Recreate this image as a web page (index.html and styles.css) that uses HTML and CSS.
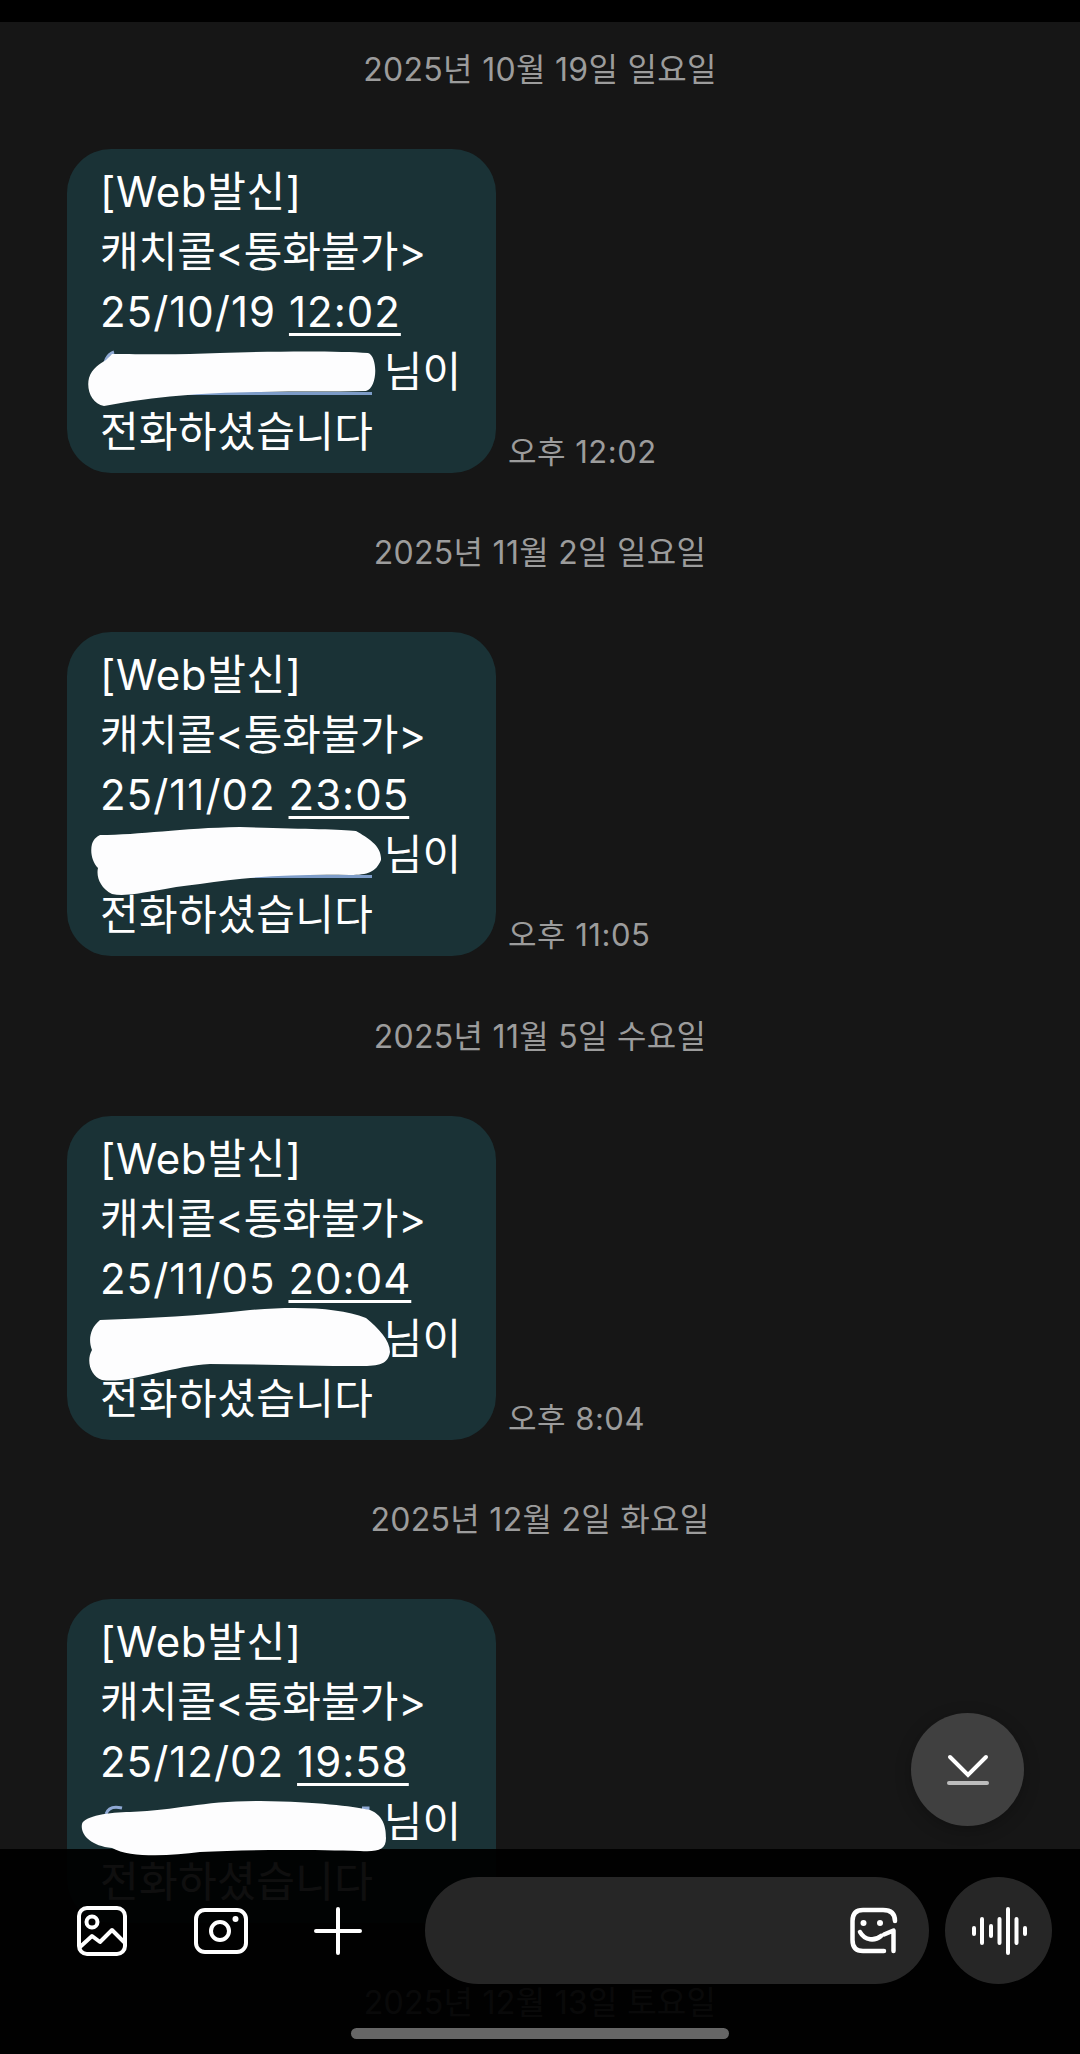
FILE: index.html
```html
<!DOCTYPE html>
<html lang="ko">
<head>
<meta charset="utf-8">
<title>메시지</title>
<link rel="stylesheet" href="styles.css">
</head>
<body>
<div class="screen">
  <div class="statusbar"></div>
  <main class="thread">
    <section class="day">
      <div class="date">2025년 10월 19일 일요일</div>
      <div class="msg">
        <div class="bubble">
          <div class="head">[Web발신]</div>
          <div>캐치콜&lt;통화불가&gt;</div>
          <div class="stamp">25/10/19 <u>12:02</u></div>
          <div><span class="phone"></span> 님이</div>
          <div class="tail">전화하셨습니다</div>
        </div>
        <time class="time">오후 12:02</time>
      </div>
    </section>
    <section class="day">
      <div class="date">2025년 11월 2일 일요일</div>
      <div class="msg">
        <div class="bubble">
          <div class="head">[Web발신]</div>
          <div>캐치콜&lt;통화불가&gt;</div>
          <div class="stamp">25/11/02 <u>23:05</u></div>
          <div><span class="phone"></span> 님이</div>
          <div class="tail">전화하셨습니다</div>
        </div>
        <time class="time">오후 11:05</time>
      </div>
    </section>
    <section class="day">
      <div class="date">2025년 11월 5일 수요일</div>
      <div class="msg">
        <div class="bubble">
          <div class="head">[Web발신]</div>
          <div>캐치콜&lt;통화불가&gt;</div>
          <div class="stamp">25/11/05 <u>20:04</u></div>
          <div><span class="phone"></span> 님이</div>
          <div class="tail">전화하셨습니다</div>
        </div>
        <time class="time">오후 8:04</time>
      </div>
    </section>
    <section class="day">
      <div class="date">2025년 12월 2일 화요일</div>
      <div class="msg">
        <div class="bubble">
          <div class="head">[Web발신]</div>
          <div>캐치콜&lt;통화불가&gt;</div>
          <div class="stamp">25/12/02 <u>19:58</u></div>
          <div><span class="phone"></span> 님이</div>
          <div class="tail">전화하셨습니다</div>
        </div>
        <time class="time">오후 7:58</time>
      </div>
    </section>
    <section class="day">
      <div class="date">2025년 12월 13일 토요일</div>
    </section>
  </main>

  <div class="composer">
    <button class="tool"><svg width="50" height="50" viewBox="0 0 50 50" fill="none" stroke="#fff" stroke-width="4" stroke-linejoin="round" stroke-linecap="round"><rect x="2" y="2" width="46" height="46" rx="8"/><circle cx="15" cy="16" r="5.5"/><path d="M3 41 L15 30 L23 36 L35 24 L47 36"/></svg></button>
    <button class="tool tool-cam"><svg width="54" height="46" viewBox="0 0 54 46" fill="none" stroke="#fff" stroke-width="4"><rect x="2" y="2" width="50" height="42" rx="9"/><circle cx="26" cy="23" r="9"/><circle cx="41.5" cy="11" r="3" fill="#fff" stroke="none"/></svg></button>
    <button class="tool tool-plus"><svg width="48" height="48" viewBox="0 0 48 48" fill="none" stroke="#fff" stroke-width="4" stroke-linecap="round"><path d="M24 2V46M2 24H46"/></svg></button>
    <div class="input">
      <svg width="50" height="48" viewBox="0 0 50 48" fill="none" stroke="#fff" stroke-width="4.500" stroke-linecap="round" stroke-linejoin="round"><path d="M34 44H13C6 44 2.500 40 2.500 33V14C2.500 7 6 3 13 3H33C41 3 45 7 45 14"/><circle cx="13.500" cy="16" r="3" fill="#fff" stroke="none"/><circle cx="30" cy="16" r="3" fill="#fff" stroke="none"/><path d="M10 25C15 34 25 34 31 29"/><path d="M34 27.500L43.500 23.500V44"/></svg>
    </div>
    <button class="voice"><svg width="56" height="50" viewBox="0 0 56 50" fill="none" stroke="#fff" stroke-width="4" stroke-linecap="round"><path d="M3 22V28M11 13V37M20 20V30M28.500 13V37M37 3V47M45.500 13V37M54 22V28"/></svg></button>
  </div>

  <button class="scroll-down"><svg width="44" height="32" viewBox="0 0 44 32" fill="none" stroke-width="4" stroke-linecap="round"><path d="M4 3L22 21L40 3" stroke="#fff"/><path d="M3 29H41" stroke="#bdbdbd"/></svg></button>
  <div class="home"></div>

  <svg class="scribble" viewBox="0 0 1080 2054" width="1080" height="2054" fill="#fdfdfe">
    <path class="peek" d="M104 372C104 360 108 354 114 352M106 1814C108 1808 114 1806 122 1808M362 1808H368V1816"/>
    <path d="M112 354C140 354 180 355 220 353C280 351 340 351 368 353C378 356 378 388 366 391C330 392 300 391 260 392C200 393 160 396 104 406C92 404 86 390 89 378C92 368 100 364 106 360Z"/>
    <path d="M100 835C140 835 180 828 240 827C300 829 340 829 356 831C368 838 382 846 381 860C376 872 368 875 350 875C300 874 250 876 200 884C160 888 130 898 112 894C100 888 96 876 98 868C92 862 90 852 92 844C94 838 98 836 100 835Z"/>
    <path d="M100 1320C150 1318 200 1316 250 1310C300 1306 340 1308 366 1318C378 1328 390 1340 390 1352C388 1364 380 1366 360 1366C310 1366 260 1364 210 1364C170 1366 130 1384 102 1380C90 1376 86 1360 92 1350C88 1340 90 1328 100 1320Z"/>
    <path d="M130 1812C180 1810 200 1801 260 1801C320 1802 350 1806 370 1810C385 1816 386 1830 386 1838C386 1850 378 1852 360 1851C320 1850 250 1849 200 1852C170 1856 130 1858 112 1848C90 1846 80 1834 82 1824C84 1816 110 1812 130 1812Z"/>
  </svg>
</div>
</body>
</html>
```
FILE: styles.css
```css
* { box-sizing: border-box; }
html, body { margin: 0; padding: 0; }
body {
  background: #161616;
  font-family: Inter, "Noto Sans CJK KR", sans-serif;
}
.screen {
  position: relative;
  width: 1080px;
  height: 2054px;
  overflow: hidden;
  background: #161616;
}
.statusbar { height: 22px; background: #000; }
.thread { display: flex; flex-direction: column; }
.day { display: flex; flex-direction: column; height: 483.3px; }
.date {
  height: 127px;
  padding-top: 28px;
  text-align: center;
  font-size: 32px;
  line-height: 40px;
  letter-spacing: .3px;
  color: #9c9c9c;
}
.msg { display: flex; align-items: flex-end; gap: 12px; padding-left: 67px; }
.bubble {
  width: 429px;
  height: 324px;
  padding: 13px 20px 11px 33px;
  border-radius: 44px;
  background: #1a3236;
  color: #fff;
  font-size: 42px;
  line-height: 60px;
  white-space: nowrap;
}
.head { letter-spacing: .6px; }
.stamp { letter-spacing: 1px; }
.tail { letter-spacing: .4px; }
.bubble u { text-decoration-thickness: 3px; text-underline-offset: 6px; }
.phone {
  display: inline-block;
  width: 272px;
  height: 48px;
  border-bottom: 3px solid #7d9cc8;
  vertical-align: -8px;
}
.time {
  font-size: 31px;
  line-height: 42px;
  letter-spacing: .5px;
  color: #9c9c9c;
  white-space: nowrap;
}
.composer {
  position: absolute;
  left: 0; right: 0; top: 1849px; bottom: 0;
  display: flex;
  align-items: flex-start;
  padding-top: 28px;
  background: rgba(0,0,0,.94);
}
button { padding: 0; border: 0; background: none; display: flex; align-items: center; justify-content: center; }
.tool { width: 50px; height: 107px; margin-left: 77px; }
.tool-cam { width: 54px; margin-left: 67px; }
.tool-plus { width: 48px; margin-left: 66px; }
.input {
  width: 504px;
  height: 107px;
  margin-left: 63px;
  display: flex;
  align-items: center;
  justify-content: flex-end;
  padding-right: 29px;
  border-radius: 54px;
  background: #262626;
}
.voice { width: 107px; height: 107px; margin-left: 16px; border-radius: 50%; background: #262626; }
.scroll-down {
  position: absolute;
  left: 911px; top: 1713px;
  width: 113px; height: 113px;
  border-radius: 50%;
  background: #404040;
  box-shadow: 0 4px 16px rgba(0,0,0,.25);
}
.home {
  position: absolute;
  left: 351px; top: 2028px;
  width: 378px; height: 11px;
  border-radius: 6px;
  background: #666;
}
.scribble { position: absolute; left: 0; top: 0; pointer-events: none; }
.peek { fill: none; stroke: #8fa9d4; stroke-width: 3; }
```
